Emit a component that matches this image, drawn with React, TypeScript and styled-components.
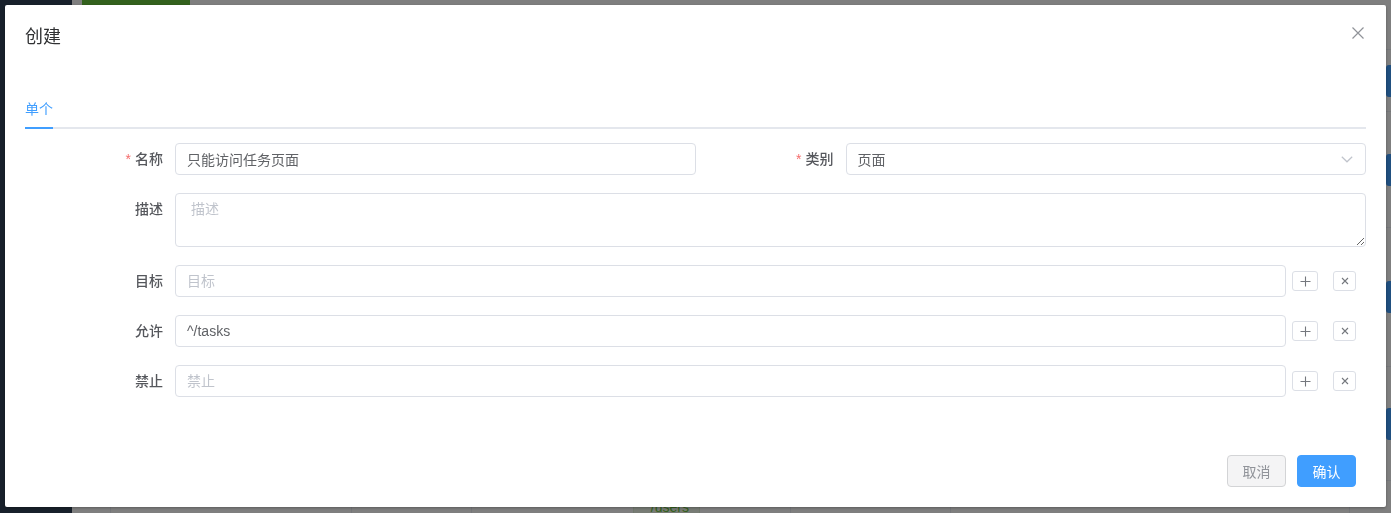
import React from "react";
import styled, { createGlobalStyle } from "styled-components";

const GlobalStyle = createGlobalStyle`
  * {
    box-sizing: border-box;
  }
  html,
  body {
    margin: 0;
    padding: 0;
    height: 100%;
  }
  body {
    font-family: "Liberation Sans", "Noto Sans CJK SC", "Noto Sans", sans-serif;
    font-size: 14px;
    color: #606266;
    overflow: hidden;
  }
  #root {
    height: 100%;
  }
`;

const App = () => {
  return (
    <>
      <GlobalStyle />
      <Page>
        <Sidebar />
        <Main>
          <Toolbar>
            <GreenButton />
          </Toolbar>
          <Table>
            <TableRow $height={36}>
              <Cell />
              <Cell />
              <Cell />
              <Cell />
              <Cell />
              <Cell />
              <ActionCell />
            </TableRow>
            {[62, 116, 139, 114].map((h, i) => (
              <TableRow key={i} $height={h}>
                <Cell />
                <Cell />
                <Cell />
                <Cell />
                <Cell />
                <Cell />
                <ActionCell>
                  <BlueButton aria-label="edit" />
                </ActionCell>
              </TableRow>
            ))}
            <TableRow $height={80}>
              <Cell />
              <Cell />
              <Cell />
              <TagCell>
                <Tag>^/users</Tag>
              </TagCell>
              <Cell />
              <Cell />
              <ActionCell />
            </TableRow>
          </Table>
        </Main>
      </Page>

      <Overlay>
        <Dialog>
          <DialogHeader>
            <DialogTitle>创建</DialogTitle>
            <CloseButton aria-label="close">
              <svg width="16" height="16" viewBox="0 0 16 16">
                <path
                  d="M2.5 2.5 L13.5 13.5 M13.5 2.5 L2.5 13.5"
                  stroke="#909399"
                  strokeWidth="1.2"
                  fill="none"
                />
              </svg>
            </CloseButton>
          </DialogHeader>

          <DialogBody>
            <TabNav>
              <TabItem $active>单个</TabItem>
            </TabNav>

            <TwoCols>
              <FormItem>
                <Label $required>名称</Label>
                <Content>
                  <Input defaultValue="只能访问任务页面" />
                </Content>
              </FormItem>
              <FormItem>
                <Label $required>类别</Label>
                <Content>
                  <SelectBox>
                    <Input readOnly defaultValue="页面" />
                    <SelectArrow width="12" height="7" viewBox="0 0 12 7">
                      <path
                        d="M0.8 0.8 L6 5.8 L11.2 0.8"
                        stroke="#c0c4cc"
                        strokeWidth="1.2"
                        fill="none"
                      />
                    </SelectArrow>
                  </SelectBox>
                </Content>
              </FormItem>
            </TwoCols>

            <FormItem>
              <Label>描述</Label>
              <Content>
                <TextArea rows={2} placeholder="描述" />
              </Content>
            </FormItem>

            {[
              { label: "目标", value: "", placeholder: "目标" },
              { label: "允许", value: "^/tasks", placeholder: "允许" },
              { label: "禁止", value: "", placeholder: "禁止" },
            ].map((row) => (
              <FormItem key={row.label}>
                <Label>{row.label}</Label>
                <Content $padRight>
                  <Input defaultValue={row.value} placeholder={row.placeholder} />
                  <IconButton aria-label="add">
                    <svg width="11" height="11" viewBox="0 0 11 11">
                      <path
                        d="M5.5 0.5 V10.5 M0.5 5.5 H10.5"
                        stroke="#74777d"
                        strokeWidth="1.1"
                        fill="none"
                      />
                    </svg>
                  </IconButton>
                  <IconButton $narrow aria-label="remove">
                    <svg width="8" height="8" viewBox="0 0 8 8">
                      <path
                        d="M1 1 L7 7 M7 1 L1 7"
                        stroke="#74777d"
                        strokeWidth="1.1"
                        fill="none"
                      />
                    </svg>
                  </IconButton>
                </Content>
              </FormItem>
            ))}
          </DialogBody>

          <DialogFooter>
            <Button $variant="info">取消</Button>
            <Button $variant="primary">确认</Button>
          </DialogFooter>
        </Dialog>
      </Overlay>
    </>
  );
};

export default App;

/* background page */

const Page = styled.div`
  display: flex;
  height: 100vh;
  background: #fff;
`;

const Sidebar = styled.aside`
  width: 72px;
  flex-shrink: 0;
  background: #304156;
`;

const Main = styled.main`
  flex: 1;
  min-width: 0;
  display: flex;
  flex-direction: column;
  overflow: hidden;
`;

const Toolbar = styled.div`
  flex-shrink: 0;
  height: 14px;
  padding-left: 10px;
  display: flex;
  align-items: flex-start;
`;

const GreenButton = styled.div`
  width: 108px;
  height: 5px;
  background: #67c23a;
`;

const Table = styled.div`
  flex-shrink: 0;
  display: flex;
  flex-direction: column;
`;

const TableRow = styled.div<{ $height: number }>`
  flex-shrink: 0;
  display: grid;
  grid-template-columns: 39px 241px 120px 319px 160px 399px 200px;
  height: ${({ $height }) => $height}px;
  border-bottom: 1px solid #ebeef5;
`;

const Cell = styled.div`
  border-right: 1px solid #ebeef5;
`;

const TagCell = styled(Cell)`
  display: flex;
  align-items: flex-start;
  justify-content: flex-end;
  padding: 12px 90px 0 0;
`;

const Tag = styled.span`
  height: 28px;
  padding: 0 10px;
  line-height: 26px;
  font-size: 14px;
  color: #67c23a;
  background: #f0f9eb;
  border: 1px solid #e1f3d8;
  border-radius: 4px;
`;

const ActionCell = styled.div`
  display: flex;
  align-items: center;
  padding-left: 36px;
`;

const BlueButton = styled.div`
  width: 60px;
  height: 32px;
  background: #409eff;
  border-radius: 3px;
`;

/* dialog */

const Overlay = styled.div`
  position: fixed;
  inset: 0;
  background: rgba(0, 0, 0, 0.5);
  display: flex;
  align-items: flex-start;
  padding: 5px 5px 0 5px;
`;

const Dialog = styled.div`
  position: relative;
  width: 1381px;
  background: #fff;
  border-radius: 2px;
  box-shadow: 0 1px 3px rgba(0, 0, 0, 0.3);
`;

const DialogHeader = styled.div`
  padding: 20px 20px 10px;
`;

const DialogTitle = styled.span`
  display: block;
  font-size: 18px;
  line-height: 24px;
  color: #303133;
`;

const CloseButton = styled.button`
  position: absolute;
  top: 20px;
  right: 20px;
  width: 16px;
  height: 16px;
  padding: 0;
  border: none;
  background: none;
  display: flex;
  cursor: pointer;
`;

const DialogBody = styled.div`
  padding: 30px 20px;
`;

const TabNav = styled.div`
  position: relative;
  display: flex;
  height: 40px;
  margin-bottom: 14px;

  &::after {
    content: "";
    position: absolute;
    left: 0;
    right: 0;
    bottom: 0;
    height: 2px;
    background: #e4e7ed;
  }
`;

const TabItem = styled.div<{ $active?: boolean }>`
  position: relative;
  line-height: 40px;
  font-size: 14px;
  color: ${({ $active }) => ($active ? "#409eff" : "#303133")};

  &::after {
    content: "";
    position: absolute;
    left: 0;
    right: 0;
    bottom: 0;
    height: 2px;
    z-index: 1;
    background: ${({ $active }) => ($active ? "#409eff" : "transparent")};
  }
`;

const TwoCols = styled.div`
  display: grid;
  grid-template-columns: 1fr 1fr;
`;

const FormItem = styled.div`
  display: flex;
  margin-bottom: 18px;
`;

const Label = styled.label<{ $required?: boolean }>`
  width: 150px;
  flex-shrink: 0;
  padding-right: 12px;
  text-align: right;
  line-height: 32px;
  font-size: 14px;
  font-weight: 500;
  color: #55575c;

  &::before {
    content: ${({ $required }) => ($required ? '"*"' : "none")};
    color: #f56c6c;
    margin-right: 4px;
  }
`;

const Content = styled.div<{ $padRight?: boolean }>`
  flex: 1;
  min-width: 0;
  display: flex;
  align-items: center;
  padding-right: ${({ $padRight }) => ($padRight ? "10px" : "0")};
`;

const Input = styled.input`
  flex: 1;
  min-width: 0;
  width: 100%;
  height: 32px;
  padding: 0 11px;
  border: 1px solid #dcdfe6;
  border-radius: 4px;
  font: inherit;
  font-size: 14px;
  color: #606266;
  background: #fff;
  outline: none;

  &::placeholder {
    color: #c0c4cc;
  }
`;

const SelectBox = styled.div`
  position: relative;
  flex: 1;
  display: flex;
`;

const SelectArrow = styled.svg`
  position: absolute;
  right: 13px;
  top: 13px;
`;

const TextArea = styled.textarea`
  flex: 1;
  display: block;
  padding: 5px 15px;
  border: 1px solid #dcdfe6;
  border-radius: 4px;
  font: inherit;
  font-size: 14px;
  line-height: 1.5;
  color: #606266;
  resize: vertical;
  outline: none;

  &::placeholder {
    color: #c0c4cc;
  }
`;

const IconButton = styled.button<{ $narrow?: boolean }>`
  flex-shrink: 0;
  width: ${({ $narrow }) => ($narrow ? "23px" : "26px")};
  height: 20px;
  margin-left: ${({ $narrow }) => ($narrow ? "15px" : "6px")};
  padding: 0;
  border: 1px solid #dcdfe6;
  border-radius: 3px;
  background: #fff;
  display: flex;
  align-items: center;
  justify-content: center;
  cursor: pointer;
`;

const DialogFooter = styled.div`
  display: flex;
  justify-content: flex-end;
  gap: 11px;
  padding: 10px 30px 20px 20px;
`;

const Button = styled.button<{ $variant: "info" | "primary" }>`
  height: 32px;
  padding: 0 14.5px;
  border-radius: 4px;
  font: inherit;
  font-size: 14px;
  cursor: pointer;
  border: 1px solid
    ${({ $variant }) => ($variant === "primary" ? "#409eff" : "#d3d4d6")};
  background: ${({ $variant }) => ($variant === "primary" ? "#409eff" : "#f4f4f5")};
  color: ${({ $variant }) => ($variant === "primary" ? "#fff" : "#909399")};
`;
